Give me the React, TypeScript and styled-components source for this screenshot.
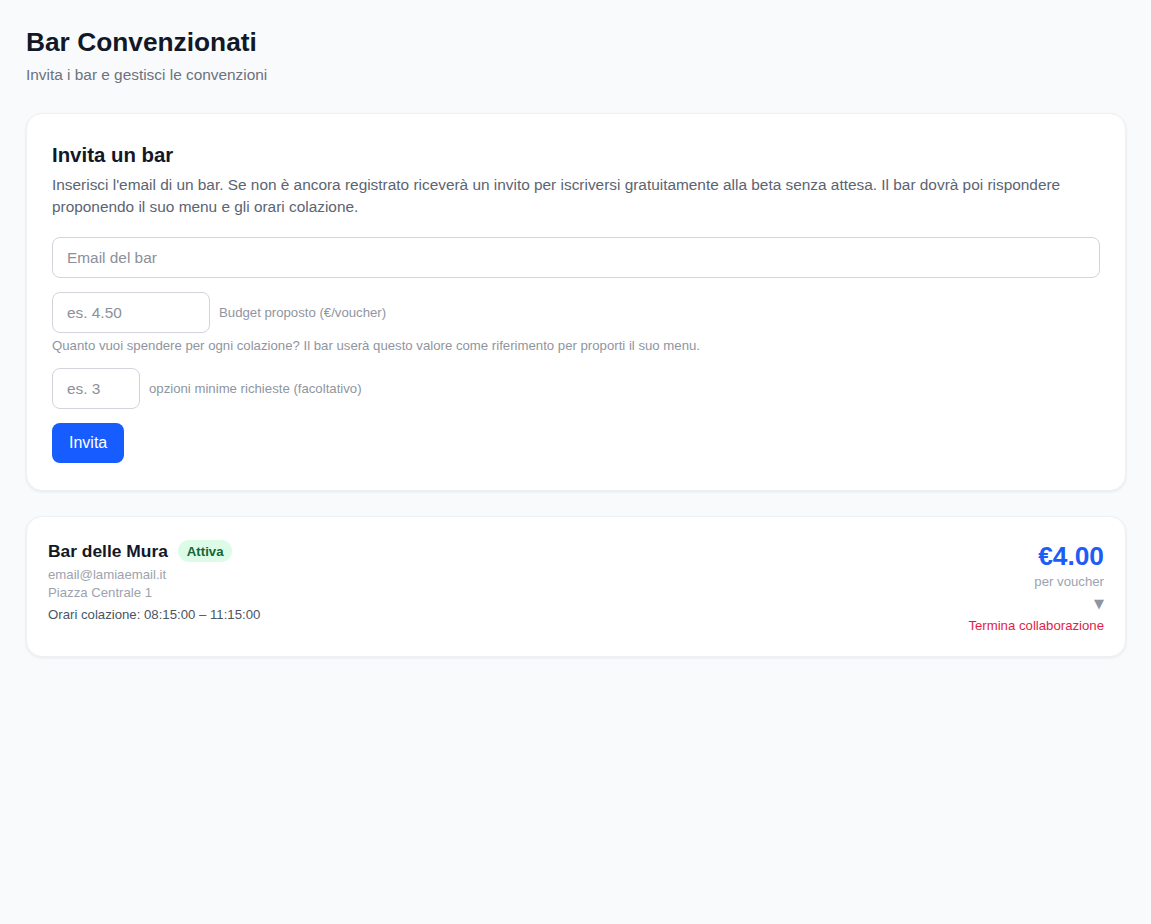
import React from "react";
import styled, { createGlobalStyle } from "styled-components";

const GlobalStyle = createGlobalStyle`
  html, body {
    margin: 0;
    padding: 0;
    background: #f9fafb;
    font-family: "Liberation Sans", Arial, Helvetica, sans-serif;
    color: #111827;
  }
  * { box-sizing: border-box; }
`;

const Page = styled.main`
  padding: 26px 25px 26px 26px;
  display: flex;
  flex-direction: column;
`;

const Title = styled.h1`
  margin: 0;
  font-size: 26.3px;
  line-height: 32px;
  font-weight: 700;
  color: #111827;
`;

const Subtitle = styled.p`
  margin: 7px 0 0;
  font-size: 15.4px;
  line-height: 20px;
  color: #6b7280;
`;

const Cards = styled.div`
  margin-top: 28px;
  display: flex;
  flex-direction: column;
  gap: 25px;
`;

const Card = styled.section<{ $pad: string }>`
  background: #ffffff;
  border-radius: 16px;
  border: 1px solid #eef0f3;
  box-shadow: 0 1px 3px rgba(17, 24, 39, 0.08);
  padding: ${(p) => p.$pad};
`;

const CardTitle = styled.h2`
  margin: 0;
  font-size: 20.4px;
  line-height: 26px;
  font-weight: 700;
  color: #111827;
`;

const Description = styled.p`
  margin: 6px 0 0;
  font-size: 15.4px;
  line-height: 22px;
  color: #5b6472;
`;

const Form = styled.form`
  margin-top: 19px;
  display: flex;
  flex-direction: column;
  gap: 14px;
`;

const Input = styled.input<{ $width?: number }>`
  width: ${(p) => (p.$width ? `${p.$width}px` : "100%")};
  height: 41px;
  padding: 0 14px;
  border: 1px solid #d1d5db;
  border-radius: 8px;
  font-family: inherit;
  font-size: 15.4px;
  color: #111827;
  background: #fff;
  outline: none;
  &::placeholder { color: #8b909a; }
`;

const FieldGroup = styled.div`
  display: flex;
  flex-direction: column;
  gap: 5px;
`;

const InlineRow = styled.div`
  display: flex;
  align-items: center;
  gap: 9px;
`;

const FieldLabel = styled.span`
  font-size: 13.2px;
  font-weight: 500;
  color: #8f95a0;
`;

const Help = styled.p`
  margin: 0;
  font-size: 13.2px;
  line-height: 16px;
  font-weight: 500;
  color: #8f95a0;
`;

const PrimaryButton = styled.button`
  align-self: flex-start;
  height: 40px;
  padding: 0 17px;
  border: none;
  border-radius: 8px;
  background: #175cff;
  color: #fff;
  font-family: inherit;
  font-size: 16px;
  cursor: pointer;
`;

const BarRow = styled.div`
  display: flex;
  justify-content: space-between;
  align-items: flex-start;
`;

const BarInfo = styled.div`
  display: flex;
  flex-direction: column;
`;

const NameLine = styled.div`
  display: flex;
  align-items: center;
  gap: 10px;
  height: 24px;
`;

const BarName = styled.h3`
  margin: 0;
  font-size: 17.4px;
  line-height: 22px;
  font-weight: 700;
  color: #111827;
`;

const Badge = styled.span`
  display: inline-flex;
  align-items: center;
  height: 22px;
  padding: 0 9px;
  border-radius: 999px;
  background: #dcfce7;
  color: #166534;
  font-size: 13.2px;
  font-weight: 700;
`;

const Meta = styled.div<{ $dark?: boolean; $gap?: number }>`
  margin-top: ${(p) => p.$gap ?? 0}px;
  font-size: 13.2px;
  line-height: 18px;
  color: ${(p) => (p.$dark ? "#4b5563" : "#9ca3af")};
`;

const PriceBox = styled.div`
  display: flex;
  flex-direction: column;
  align-items: flex-end;
`;

const Price = styled.div`
  font-size: 26.3px;
  line-height: 34px;
  font-weight: 700;
  color: #1d5cf5;
`;

const PriceNote = styled.div`
  font-size: 13.2px;
  line-height: 18px;
  color: #9ca3af;
`;

const Toggle = styled.button`
  border: none;
  background: none;
  padding: 0;
  margin-top: 4px;
  height: 18px;
  font-family: "DejaVu Sans", sans-serif;
  font-size: 13px;
  line-height: 18px;
  color: #8f95a0;
  cursor: pointer;
`;

const DangerLink = styled.button`
  border: none;
  background: none;
  padding: 0;
  margin-top: 4px;
  font-family: inherit;
  font-size: 13.2px;
  line-height: 18px;
  color: #e11d48;
  cursor: pointer;
`;

export default function App() {
  return (
    <>
      <GlobalStyle />
      <Page>
        <Title>Bar Convenzionati</Title>
        <Subtitle>Invita i bar e gestisci le convenzioni</Subtitle>
        <Cards>
          <Card $pad="28px 25px 27px">
            <CardTitle>Invita un bar</CardTitle>
            <Description>
              Inserisci l'email di un bar. Se non è ancora registrato riceverà un invito per
              iscriversi gratuitamente alla beta senza attesa. Il bar dovrà poi rispondere
              proponendo il suo menu e gli orari colazione.
            </Description>
            <Form onSubmit={(e) => e.preventDefault()}>
              <Input type="email" placeholder="Email del bar" />
              <FieldGroup>
                <InlineRow>
                  <Input $width={158} placeholder="es. 4.50" />
                  <FieldLabel>Budget proposto (€/voucher)</FieldLabel>
                </InlineRow>
                <Help>
                  Quanto vuoi spendere per ogni colazione? Il bar userà questo valore come
                  riferimento per proporti il suo menu.
                </Help>
              </FieldGroup>
              <InlineRow>
                <Input $width={88} placeholder="es. 3" />
                <FieldLabel>opzioni minime richieste (facoltativo)</FieldLabel>
              </InlineRow>
              <PrimaryButton type="submit">Invita</PrimaryButton>
            </Form>
          </Card>

          <Card $pad="22px 21px 21px">
            <BarRow>
              <BarInfo>
                <NameLine>
                  <BarName>Bar delle Mura</BarName>
                  <Badge>Attiva</Badge>
                </NameLine>
                <Meta $gap={3}>email@lamiaemail.it</Meta>
                <Meta>Piazza Centrale 1</Meta>
                <Meta $dark $gap={4}>Orari colazione: 08:15:00 – 11:15:00</Meta>
              </BarInfo>
              <PriceBox>
                <Price>€4.00</Price>
                <PriceNote>per voucher</PriceNote>
                <Toggle aria-label="Dettagli">▼</Toggle>
                <DangerLink>Termina collaborazione</DangerLink>
              </PriceBox>
            </BarRow>
          </Card>
        </Cards>
      </Page>
    </>
  );
}
